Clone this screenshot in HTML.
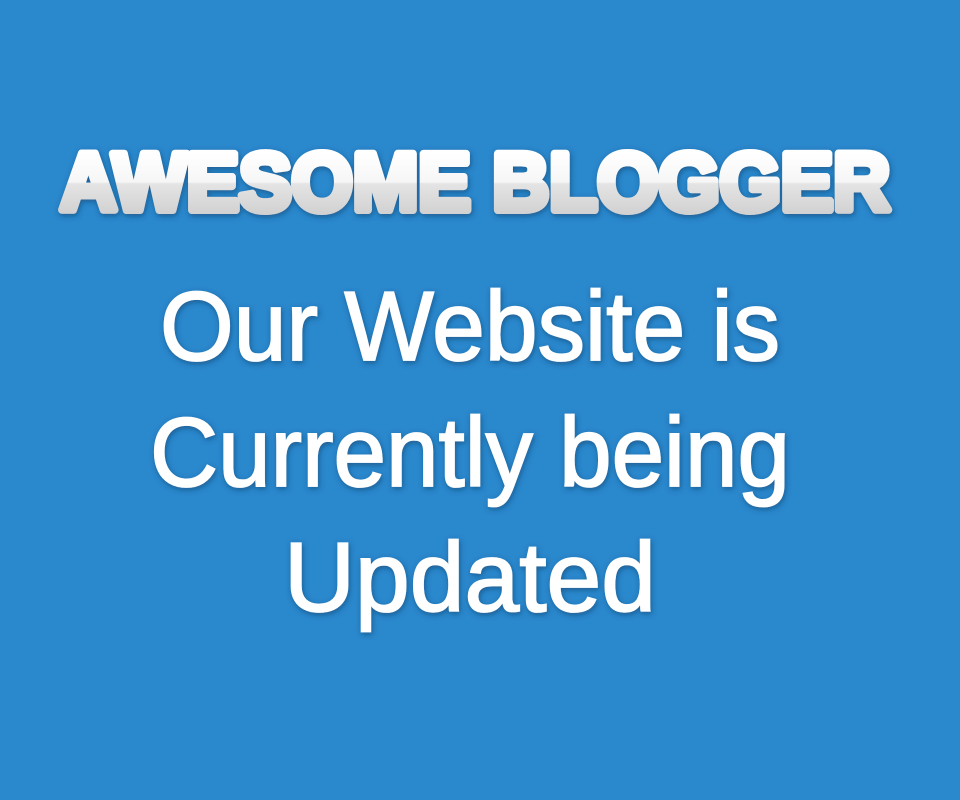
<!DOCTYPE html>
<html><head><style>
html,body{margin:0;padding:0;background:#2a88cd;}
svg{display:block}
</style></head><body>
<svg width="960" height="800" viewBox="0 0 960 800" xmlns="http://www.w3.org/2000/svg">
<defs>
<filter id="s" x="-10%" y="-20%" width="120%" height="140%"><feDropShadow dx="1" dy="2" stdDeviation="3" flood-color="#0a3a66" flood-opacity="0.6"/></filter>
<linearGradient id="tg" gradientUnits="userSpaceOnUse" x1="0" y1="152" x2="0" y2="212">
<stop offset="0" stop-color="#ffffff"/><stop offset="0.5" stop-color="#f6f6f6"/><stop offset="0.53" stop-color="#e4e4e4"/><stop offset="1" stop-color="#d2d2d2"/>
</linearGradient>
</defs>
<rect width="960" height="800" fill="#2a88cd"/>
<text x="60" y="210" textLength="830" lengthAdjust="spacingAndGlyphs" font-family="Liberation Sans, sans-serif" font-weight="bold" font-size="82" fill="url(#tg)" stroke="url(#tg)" stroke-width="8" stroke-linejoin="round" filter="url(#s)">AWESOME BLOGGER</text>
<g font-family="Liberation Sans, DejaVu Sans, sans-serif" font-size="98" fill="#ffffff" stroke="#ffffff" stroke-width="1.8" filter="url(#s)">
<text x="160" y="360" textLength="620" lengthAdjust="spacingAndGlyphs">Our Website is</text>
<text x="150" y="486" textLength="640" lengthAdjust="spacingAndGlyphs">Currently being</text>
<text x="284" y="611" textLength="372" lengthAdjust="spacingAndGlyphs">Updated</text>
</g>
</svg>
</body></html>
